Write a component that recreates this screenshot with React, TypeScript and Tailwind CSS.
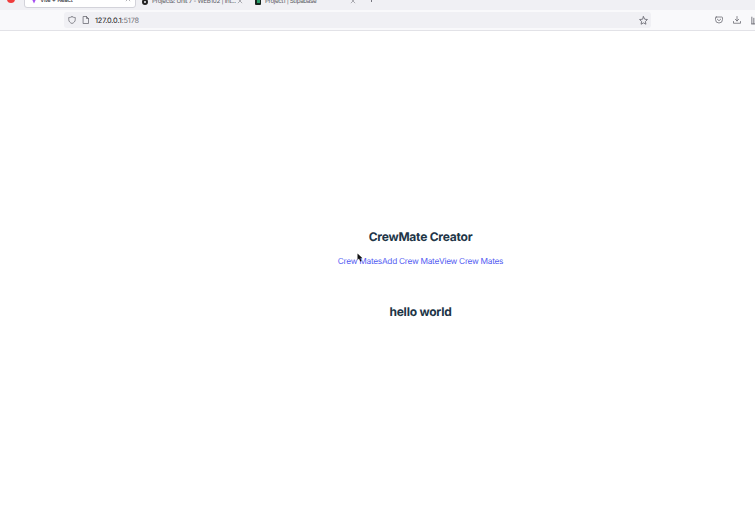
import type { ReactNode } from 'react';

function Icon({ className, children }: { className: string; children: ReactNode }) {
  return (
    <svg viewBox="0 0 16 16" fill="none" stroke="currentColor" strokeWidth="1.5" strokeLinecap="round" strokeLinejoin="round" className={`shrink-0 ${className}`}>
      {children}
    </svg>
  );
}

function Close({ className }: { className: string }) {
  return (
    <Icon className={`h-[6px] w-[6px] text-[#77777e] ${className}`}>
      <path d="M3 3l10 10M13 3L3 13" />
    </Icon>
  );
}

function TabStrip() {
  return (
    <header className="flex h-[10px] shrink-0 items-end overflow-hidden bg-[#f0f0f4] text-[6.3px] leading-[10px] text-[#5e5e67]">
      <div className="mb-[7px] ml-[7px] h-[8px] w-[8px] shrink-0 rounded-full bg-[#ef3c3c]" />
      <div className="mb-[2px] ml-[9px] flex h-5 w-[112px] shrink-0 items-end rounded-[3px] border border-[#d3d3da] bg-white pb-[2px] pl-[5px] text-[#25252d]">
        <svg viewBox="0 0 8 8" className="mb-px h-2 w-2 shrink-0">
          <path d="M0.5 0h7L4 7.5z" fill="#a44cf0" />
        </svg>
        <span className="ml-[2px] w-[85px] whitespace-nowrap tracking-[-0.300px]">Vite + React</span>
        <Close className="mb-[3px]" />
      </div>
      <div className="mb-[4px] ml-[6px] flex w-[101px] shrink-0 items-end">
        <div className="mb-px h-[6px] w-[6px] shrink-0 rounded-full border-2 border-[#222]" />
        <span className="ml-[4px] w-[85px] whitespace-nowrap tracking-[-0.320px]">Projects: Unit 7 - WEB102 | Int...</span>
        <Close className="mb-[2px]" />
      </div>
      <div className="mb-[4px] ml-[12px] flex w-[101px] shrink-0 items-end">
        <div className="mb-px h-[6px] w-[6px] shrink-0 rounded-[1px] bg-[#17251f]">
          <div className="ml-[2px] h-[4px] w-[3px] bg-[#299b69]" />
        </div>
        <span className="ml-[4px] w-[85px] whitespace-nowrap tracking-[-0.400px]">Project1 | Supabase</span>
        <Close className="mb-[2px]" />
      </div>
      <div className="mb-[8px] ml-[15px] h-[6px] w-px bg-[#777780]" />
    </header>
  );
}

function Toolbar() {
  return (
    <div className="flex h-[21px] shrink-0 items-center border-b border-[#e2e2e7] bg-[#f9f9fb] pl-[64px] text-[#65656e]">
      <div className="flex h-4 w-[587px] shrink-0 items-center rounded-[3px] bg-[#f0f0f4] pl-[4px] pr-[3px]">
        <Icon className="h-[8px] w-[8px]">
          <path d="M8 1.200C10 2.700 12 3 14.500 3v4.200c0 3.700-2.500 6.200-6.500 7.800-4-1.600-6.500-4.100-6.500-7.800V3C4 3 6 2.700 8 1.200z" />
        </Icon>
        <Icon className="ml-[6px] h-[8px] w-[8px]">
          <path d="M3 1h6l4 4v10H3zM9 1v4h4" />
        </Icon>
        <span className="ml-[5px] flex-1 pt-px text-[7.400px] leading-4 tracking-[-0.170px] text-[#73737b]">
          <span className="text-[#15141a]">127.0.0.1</span>:5178
        </span>
        <Icon className="h-[9px] w-[9px]">
          <path d="M8 1.200l2.100 4.500 4.900.6-3.600 3.400.9 4.900L8 12.200l-4.300 2.400.9-4.900L1 6.300l4.900-.6z" />
        </Icon>
      </div>
      <Icon className="ml-[64px] h-[8px] w-[8px]">
        <path d="M2.500 2h11q1.500 0 1.500 1.500V7a7 7 0 0 1-14 0V3.500Q1 2 2.500 2zM4.500 6.200L8 9.500l3.500-3.300" />
      </Icon>
      <Icon className="ml-[10px] h-[8px] w-[8px]">
        <path d="M8 1v9M4.500 6.500L8 10l3.500-3.500M1 11v3.500h14V11" />
      </Icon>
      <Icon className="ml-[10px] h-[9px] w-[9px]">
        <path d="M1.500 2v12M5 4v10M8.500 4v10M1.500 14h8" />
      </Icon>
    </div>
  );
}

export default function App() {
  return (
    <div className="flex h-[516px] w-[755px] flex-col overflow-hidden bg-white font-['Inter',sans-serif] [text-rendering:geometricPrecision]">
      <TabStrip />
      <Toolbar />
      <main className="flex flex-1 flex-col items-center pl-[86px] pt-[197px] text-[#213547]">
        <h1 className="text-[12px] font-bold leading-[18px] tracking-[-0.230px]">CrewMate Creator</h1>
        <nav className="relative mt-[10px] flex whitespace-nowrap text-[8.300px] leading-3 tracking-[-0.280px] text-[#535bf2]">
          <a>Crew Mates</a>
          <a>Add Crew Mate</a>
          <a>View Crew Mates</a>
          <svg viewBox="0 0 12 18" className="absolute left-[19px] top-[-3px] h-[9px] w-[6px]">
            <path d="M1 1v13l3-3 2.500 6 2.500-1-2.500-5.500h4.500z" fill="#111" />
          </svg>
        </nav>
        <h2 className="mt-[35px] text-[12px] font-bold leading-[18px] tracking-[-0.230px]">hello world</h2>
      </main>
    </div>
  );
}
